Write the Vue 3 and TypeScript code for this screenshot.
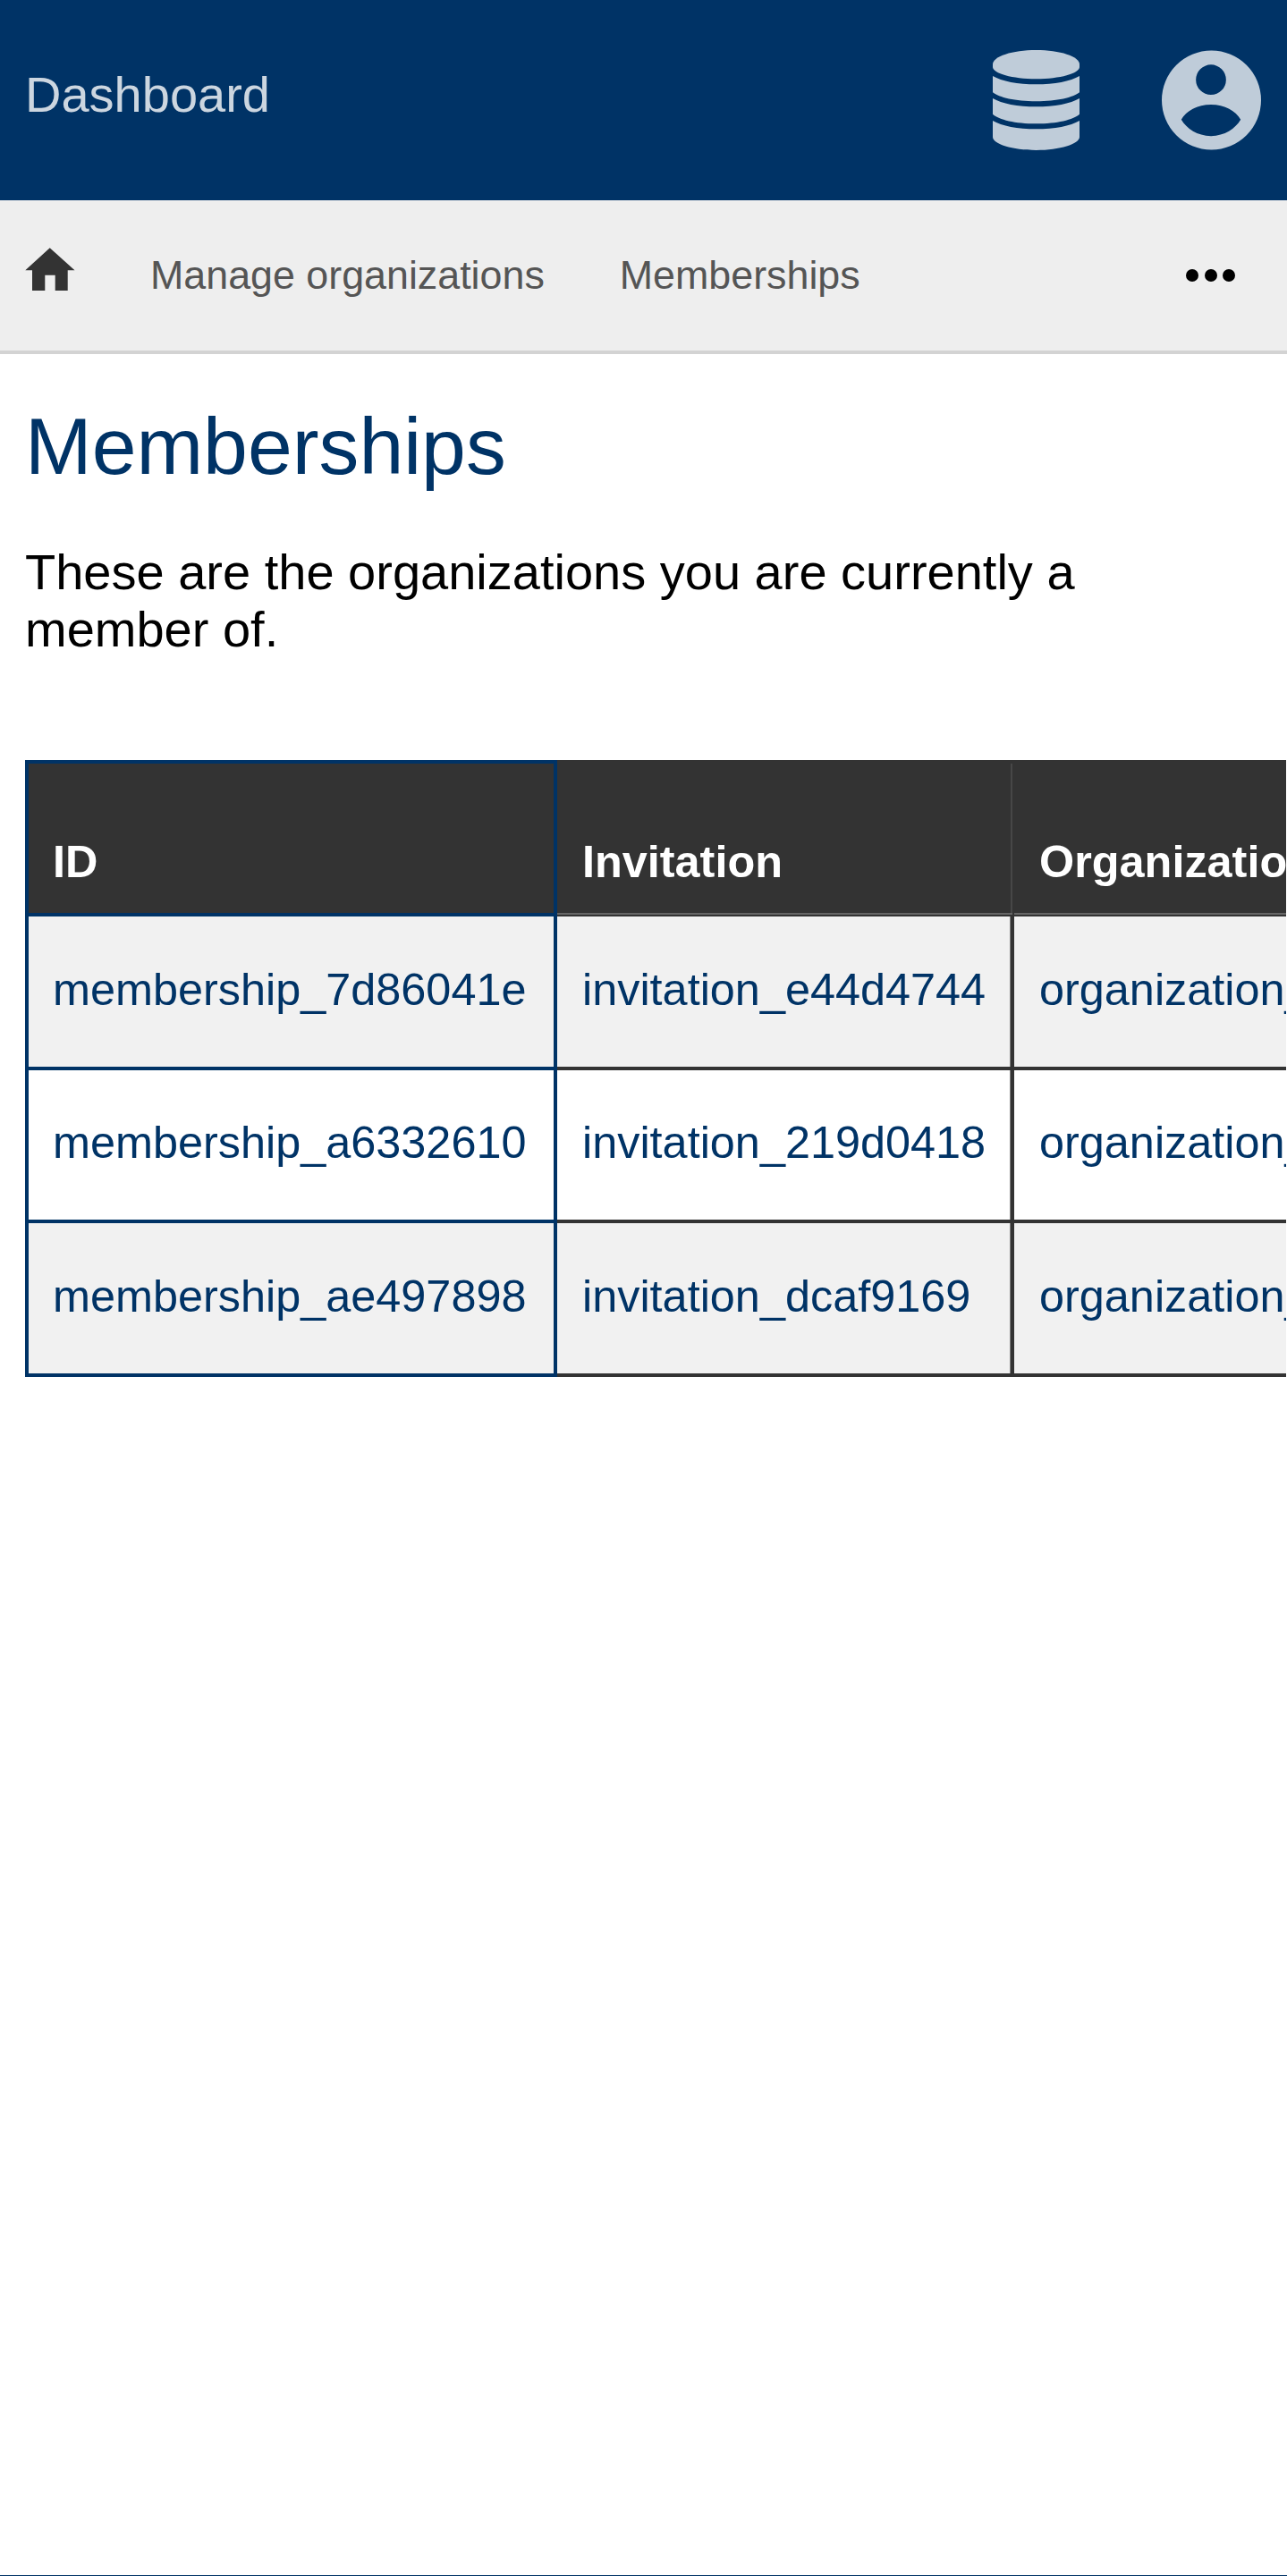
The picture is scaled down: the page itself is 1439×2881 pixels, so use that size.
<script setup lang="ts">
interface Row { id: string; invitation: string; organization: string }
const rows: Row[] = [
  { id: 'membership_7d86041e', invitation: 'invitation_e44d4744', organization: 'organization_1f3a9c20' },
  { id: 'membership_a6332610', invitation: 'invitation_219d0418', organization: 'organization_1f3a9c20' },
  { id: 'membership_ae497898', invitation: 'invitation_dcaf9169', organization: 'organization_1f3a9c20' },
]
</script>

<template>
  <div class="page">
    <header class="top">
      <a class="brand">Dashboard</a>
      <div class="top-icons">
        <svg class="db" viewBox="0 0 97 112" aria-hidden="true">
          <path fill="currentColor" d="M48.500 0C75 0 97 7 97 16V19C97 26 75 32.300 48.500 32.300S0 26 0 19V16C0 7 22 0 48.500 0z" />
          <path fill="currentColor" d="M0 29C10 35 28 38.300 48.500 38.300S87 35 97 29V47.300C90 53 72 57.300 48.500 57.300S7 53 0 47.300z" />
          <path fill="currentColor" d="M0 54C10 60 28 63.300 48.500 63.300S87 60 97 54V71.700C90 78 72 82.300 48.500 82.300S7 78 0 71.700z" />
          <path fill="currentColor" d="M0 79C10 85 28 88.300 48.500 88.300S87 85 97 79V97.300C97 105 75 112 48.500 112S0 105 0 97.300z" />
        </svg>
        <svg class="user" viewBox="0 0 112 112" aria-hidden="true">
          <path fill="currentColor" fill-rule="evenodd" d="M56 0a56 56 0 1 1 0 112A56 56 0 0 1 56 0zM55.500 16a17 17 0 1 0 0 34a17 17 0 0 0 0-34zM55.500 61C40 61 27.500 68 22 78C28 88 40 96.500 55.500 96.500S83 88 89 78C83.500 68 71 61 55.500 61z" />
        </svg>
      </div>
    </header>

    <nav class="menu">
      <svg class="home" viewBox="0 0 56 48" aria-hidden="true">
        <path fill="currentColor" d="M27.700 0.300L55.500 25.300H47.700V48H33.700V30.700H22.300V48H8V25.300H0.300z" />
      </svg>
      <a class="menu-link first">Manage organizations</a>
      <a class="menu-link">Memberships</a>
      <span class="dots" aria-hidden="true"><i></i><i></i><i></i></span>
    </nav>

    <main class="content">
      <h1>Memberships</h1>
      <p>These are the organizations you are currently a member of.</p>
      <div class="table-wrap">
        <table>
          <thead>
            <tr>
              <th class="c1">ID</th>
              <th class="c2">Invitation</th>
              <th class="c3">Organization</th>
            </tr>
          </thead>
          <tbody>
            <tr v-for="(row, index) in rows" :key="row.id" :class="{ odd: index % 2 === 0 }">
              <td class="c1"><a>{{ row.id }}</a></td>
              <td class="c2"><a>{{ row.invitation }}</a></td>
              <td class="c3"><a>{{ row.organization }}</a></td>
            </tr>
          </tbody>
        </table>
      </div>
    </main>

    <footer class="foot"></footer>
  </div>
</template>

<style>
html, body { margin: 0; background: #fff; }
</style>

<style scoped>
.page {
  display: flex;
  flex-direction: column;
  min-height: 2881px;
  font-family: "Liberation Sans", Arial, sans-serif;
  color: #000;
  box-sizing: border-box;
}
.top {
  height: 224px;
  background: #003366;
  display: flex;
  align-items: center;
  justify-content: space-between;
  padding: 0 29px 0 28px;
  flex: none;
}
.brand {
  font-size: 56px;
  color: #ccd6e0;
  margin-bottom: 13px;
}
.top-icons {
  display: flex;
  align-items: center;
  gap: 92px;
  color: #bfccd9;
}
.db { width: 97px; height: 112px; display: block; }
.user { width: 111px; height: 112px; display: block; }

.menu {
  height: 172px;
  box-sizing: border-box;
  background: #eee;
  border-bottom: 4px solid #d3d3d3;
  display: flex;
  align-items: center;
  padding: 0 57px 0 28px;
  flex: none;
}
.home { width: 56px; height: 48px; color: #333; display: block; margin-bottom: 14px; }
.menu-link { font-size: 44.8px; color: #555; margin-left: 84px; margin-bottom: 2px; }
.dots { margin-left: auto; display: flex; gap: 6.600px; width: 56px; }
.dots i { width: 14px; height: 14px; border-radius: 50%; background: #000; display: block; }

.content { padding: 52px 0 0 28px; }
h1 {
  margin: 0;
  font-size: 89.6px;
  line-height: 103px;
  font-weight: 400;
  color: #003366;
}
p {
  margin: 57px 0 0;
  width: 1250px;
  font-size: 56px;
  line-height: 64.400px;
  color: #000;
}
.table-wrap {
  margin: 113px 1px 0 0;
  overflow: hidden;
}
table {
  border-collapse: separate;
  border-spacing: 0;
  table-layout: fixed;
  width: 1900px;
  font-size: 50.4px;
}
th, td {
  box-sizing: border-box;
  padding: 0 0 0 28px;
  text-align: left;
  white-space: nowrap;
}
th {
  height: 175px;
  vertical-align: bottom;
  padding-bottom: 30px;
  background: #333;
  color: #fff;
  font-weight: 700;
  border-top: 4px solid #333;
}
td {
  height: 171.700px;
  border-bottom: 4px solid #333;
  border-right: 4px solid #333;
  background: #fff;
  padding-bottom: 5px;
}
tr.odd td { background: #f1f1f1; }
td a { color: #003366; }
.c1 { width: 595px; }
th.c1 { border: 4px solid #003366; padding-bottom: 28px; padding-left: 27px; }
td.c1 { border-left: 4px solid #003366; border-right: 4px solid #003366; border-bottom: 4px solid #003366; padding-left: 27px; }
.c2 { width: 511px; }
.c3 { width: 794px; }
th.c2, th.c3 {
  border-bottom: 2px solid #333;
  border-right: 2px solid #333;
  box-shadow: inset 0 -2px 0 #666, inset -2px 0 0 #474747;
}
td.c2 { box-shadow: inset -1px 0 0 #808080; }
.foot {
  margin-top: auto;
  height: 1px;
  background: #003366;
  flex: none;
}
</style>
